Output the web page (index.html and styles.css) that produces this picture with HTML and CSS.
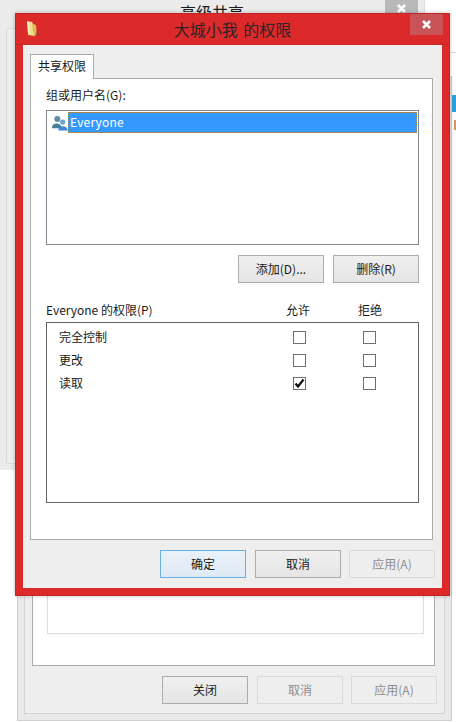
FILE: index.html
```html
<!DOCTYPE html>
<html lang="zh-CN">

<head>
    <meta charset="UTF-8">
    <meta name="viewport" content="width=device-width, initial-scale=1.0">
    <title>大城小我 的权限</title>
    <link rel="stylesheet" href="styles.css">
</head>

<body>
    <!-- bits of other windows on the right edge -->
    <div class="edgeLine"></div>
    <div class="edgeTab"></div>
    <div class="edgeMark"></div>

    <!-- window at the very back -->
    <div class="upperWin">
        <div class="upperTitle">
            <span class="upperTitleText">高级共享</span>
            <span class="upperClose">
                <svg width="11" height="9" viewBox="0 0 11 9"><path d="M2 1 L9 8 M9 1 L2 8" stroke="#fff" stroke-width="2.6" fill="none"/></svg>
            </span>
        </div>
        <div class="upperContent"></div>
    </div>

    <!-- window behind the dialog -->
    <div class="lowerWin">
        <div class="lowerContent">
            <div class="lowerPanel">
                <div class="lowerList"></div>
            </div>
            <div class="btnRow mainBtns">
                <button class="btn">关闭</button>
                <button class="btn off">取消</button>
                <button class="btn off">应用(A)</button>
            </div>
        </div>
    </div>

    <!-- red dialog -->
    <div class="dialog">
        <div class="titleBar">
            <svg class="folderIcon" width="14" height="18" viewBox="0 0 14 18">
                <path d="M1 1 L6 2 L7 4 L9 5 L9 16 L2 15 Z" fill="#f3dc8c"/>
                <path d="M6 4 L10 5 L11 15 L8 16 Z" fill="#d9b95a"/>
                <path d="M2 2 L3 14" stroke="#fff3c4" stroke-width="1.5"/>
                <path d="M11 11 L13 12 L12 16 L9 16 Z" fill="#a5342f" opacity="0.7"/>
            </svg>
            <span class="titleText">大城小我 的权限</span>
            <span class="closeBtn">
                <svg width="11" height="9" viewBox="0 0 11 9"><path d="M2 1 L9 8 M9 1 L2 8" stroke="#fff" stroke-width="2.6" fill="none"/></svg>
            </span>
        </div>
        <div class="content">
            <div class="tabs"><div class="tab">共享权限</div></div>
            <div class="panel">
                <div class="label">组或用户名(G):</div>
                <div class="userList">
                    <div class="userRow">
                        <svg class="usersIcon" width="16" height="16" viewBox="0 0 18 18">
                            <circle cx="6" cy="4.500" r="3.400" fill="#5f8ea3"/>
                            <path d="M0 14 C0 8 10 8 11 14 L11 15 L0 15 Z" fill="#4a8096"/>
                            <circle cx="12" cy="8" r="3" fill="#6fa3cf"/>
                            <path d="M7 17.500 C7 11 17 11 18 17.500 Z" fill="#3c87d9"/>
                        </svg>
                        <span class="userName">Everyone</span>
                    </div>
                </div>
                <div class="btnRow listBtns">
                    <button class="btn">添加(D)...</button>
                    <button class="btn">删除(R)</button>
                </div>
                <div class="permHead">
                    <span class="permTitle">Everyone 的权限(P)</span>
                    <span class="permCol">允许</span>
                    <span class="permCol">拒绝</span>
                </div>
                <div class="permList">
                    <div class="permRow">
                        <span class="permName">完全控制</span>
                        <span class="permCell"><span class="check"></span></span>
                        <span class="permCell"><span class="check"></span></span>
                    </div>
                    <div class="permRow">
                        <span class="permName">更改</span>
                        <span class="permCell"><span class="check"></span></span>
                        <span class="permCell"><span class="check"></span></span>
                    </div>
                    <div class="permRow">
                        <span class="permName">读取</span>
                        <span class="permCell">
                            <span class="check">
                                <svg width="11" height="11" viewBox="0 0 11 11"><path d="M1.500 5.500 L4 8.500 L9.500 1.500" stroke="#111" stroke-width="2.200" fill="none"/></svg>
                            </span>
                        </span>
                        <span class="permCell"><span class="check"></span></span>
                    </div>
                </div>
            </div>
            <div class="btnRow mainBtns">
                <button class="btn primary">确定</button>
                <button class="btn">取消</button>
                <button class="btn off">应用(A)</button>
            </div>
        </div>
    </div>
</body>

</html>
```

FILE: styles.css
```css
body {
    position: relative;
    width: 456px;
    height: 722px;
    margin: 0;
    overflow: hidden;
    background-color: #fff;
    font-family: "Noto Sans CJK SC", "Liberation Sans", sans-serif;
    font-size: 12px;
    color: #1a1a1a;
}

.edgeLine {
    position: absolute;
    left: 450px;
    top: 52px;
    width: 6px;
    height: 1px;
    background-color: #dcdcdc;
}

.edgeTab {
    position: absolute;
    left: 452px;
    top: 95px;
    width: 4px;
    height: 17px;
    background-color: #2aa3dc;
}

.edgeMark {
    position: absolute;
    left: 454px;
    top: 120px;
    width: 2px;
    height: 10px;
    background-color: #c99a62;
}

.upperWin {
    position: absolute;
    left: 0;
    top: 0;
    width: 425px;
    height: 470px;
    box-sizing: border-box;
    background-color: #ebebeb;
    border-right: 1px solid #dcdcdc;
    padding: 0 0 6px 6px;
    display: flex;
    flex-direction: column;
}

.upperTitle {
    height: 13px;
    flex: none;
    margin-left: -6px;
    margin-bottom: 15px;
    position: relative;
    overflow: hidden;
}

.upperTitleText {
    position: absolute;
    left: 180px;
    top: 3px;
    font-size: 16px;
    line-height: 18px;
}

.upperClose {
    position: absolute;
    left: 385px;
    top: 0;
    width: 33px;
    height: 13px;
    padding-top: 4px;
    box-sizing: border-box;
    display: flex;
    justify-content: center;
    background-color: #b9b9b9;
}

.upperContent {
    flex: 1;
    background-color: #eeeeee;
    border: 1px solid #dcdcdc;
    border-right: none;
}

.lowerWin {
    position: absolute;
    left: 17px;
    top: 76px;
    width: 435px;
    height: 645px;
    box-sizing: border-box;
    display: flex;
    flex-direction: column;
    background-color: #e9e9e9;
    border: 1px solid #cfcfcf;
    padding: 0 6px 6px;
}

.lowerContent {
    flex: 1;
    display: flex;
    flex-direction: column;
    background-color: #eeeeee;
    border: 1px solid #d4d4d4;
    border-top: none;
    padding: 0 9px 9px 7px;
}

.lowerPanel {
    flex: 1;
    display: flex;
    flex-direction: column;
    background-color: #fff;
    border: 1px solid #ababab;
    border-top: none;
    padding: 0 10px 31px 14px;
}

.lowerList {
    flex: 1;
    border: 1px solid #dcdcdc;
    border-top: none;
}

.dialog {
    position: absolute;
    left: 15px;
    top: 13px;
    width: 435px;
    height: 583px;
    box-sizing: border-box;
    display: flex;
    flex-direction: column;
    background-color: #dc2a2a;
    border: 1px solid #c42424;
    box-shadow: 0 0 4px rgba(0, 0, 0, 0.25);
}

.titleBar {
    position: relative;
    height: 30px;
    flex: none;
    display: flex;
    justify-content: center;
    align-items: center;
    border-bottom: 1px solid #c42424;
}

.folderIcon {
    position: absolute;
    left: 10px;
    top: 6px;
}

.titleText {
    font-size: 16px;
    word-spacing: 2px;
    color: #2e2326;
}

.closeBtn {
    position: absolute;
    right: 6px;
    top: 0;
    width: 33px;
    height: 21px;
    display: flex;
    justify-content: center;
    align-items: center;
    background-color: #c95357;
}

.content {
    flex: 1;
    display: flex;
    flex-direction: column;
    background-color: #eeeeee;
    margin: 0 7px 7px;
    padding: 9px 9px 0 7px;
}

.tabs {
    display: flex;
    height: 25px;
    margin-bottom: -1px;
    position: relative;
}

.tab {
    width: 64px;
    height: 25px;
    box-sizing: border-box;
    background-color: #fff;
    border: 1px solid #ababab;
    border-bottom: none;
    line-height: 22px;
    text-align: center;
}

.panel {
    height: 462px;
    box-sizing: border-box;
    display: flex;
    flex-direction: column;
    background-color: #fff;
    border: 1px solid #ababab;
    padding: 7px 13px 0 15px;
}

.label {
    height: 24px;
    line-height: 17px;
}

.userList {
    height: 135px;
    flex: none;
    box-sizing: border-box;
    border: 1px solid #828790;
    padding: 1px 1px 0 5px;
}

.userRow {
    display: flex;
    align-items: center;
    height: 21px;
}

.usersIcon {
    flex: none;
}

.userName {
    flex: 1;
    height: 21px;
    box-sizing: border-box;
    line-height: 19px;
    padding-left: 2px;
    letter-spacing: 0.2px;
    background-color: #3399ff;
    color: #fff;
    outline: 1px dotted #b08a4a;
    outline-offset: -1px;
}

.btnRow {
    display: flex;
    justify-content: flex-end;
    gap: 9px;
    flex: none;
}

.listBtns {
    margin-top: 10px;
}

.btn {
    width: 86px;
    height: 28px;
    box-sizing: border-box;
    padding: 0 0 2px;
    border: 1px solid #acacac;
    background: linear-gradient(#f0f0f0, #e5e5e5);
    font-family: inherit;
    font-size: 12px;
    color: #1a1a1a;
}

.btn.primary {
    border-color: #66afe9;
    background: linear-gradient(#eaf2f9, #dfeaf5);
}

.btn.off {
    border-color: #d9d9d9;
    background: #eeeeee;
    color: #8d8d8d;
}

.permHead {
    display: flex;
    align-items: center;
    height: 17px;
    margin-top: 18px;
}

.permTitle {
    width: 216px;
}

.permCol {
    width: 72px;
    text-align: center;
}

.permList {
    height: 181px;
    box-sizing: border-box;
    margin-top: 4px;
    border: 1px solid #646464;
    padding: 3px 0 0 12px;
}

.permRow {
    display: flex;
    align-items: center;
    height: 23px;
}

.permName {
    width: 205px;
    padding-bottom: 2px;
}

.permCell {
    width: 70px;
    display: flex;
    justify-content: center;
}

.check {
    width: 13px;
    height: 13px;
    box-sizing: border-box;
    display: flex;
    align-items: center;
    justify-content: center;
    border: 1px solid #707070;
    background-color: #fff;
}

.mainBtns {
    margin-top: 10px;
    margin-right: -2px;
}

.mainBtns .btn:last-child {
    margin-left: -1px;
}
```
